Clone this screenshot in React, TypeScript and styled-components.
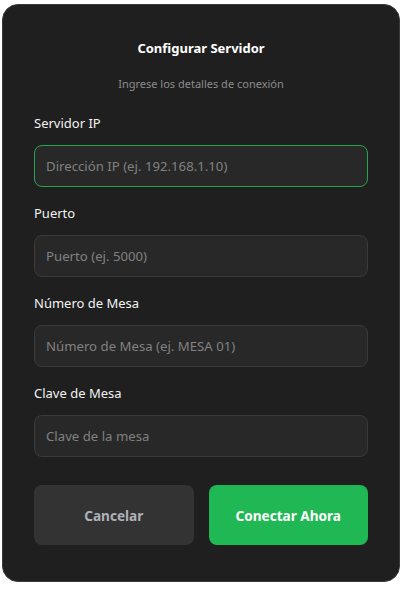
import styled, { createGlobalStyle } from "styled-components";

const GlobalStyle = createGlobalStyle`
  html, body {
    margin: 0;
    padding: 0;
    background: #fff;
  }
  body {
    font-family: "Noto Sans", "Open Sans", sans-serif;
  }
`;

const Card = styled.div`
  box-sizing: border-box;
  width: 398px;
  height: 578px;
  margin: 4px 0 0 2px;
  background: #1f1f1f;
  border: 1px solid #3a3a3a;
  border-radius: 16px;
  padding: 34px 31px 0 31px;
  display: flex;
  flex-direction: column;
`;

const Title = styled.h2`
  margin: 0;
  font-size: 13px;
  line-height: 18px;
  font-weight: 700;
  color: #fff;
  text-align: center;
`;

const Subtitle = styled.p`
  margin: 20px 0 0;
  font-size: 11px;
  line-height: 14px;
  color: #8c8c8c;
  text-align: center;
`;

const Form = styled.div`
  display: flex;
  flex-direction: column;
  gap: 17px;
  margin-top: 23px;
`;

const Field = styled.label`
  display: flex;
  flex-direction: column;
  gap: 13px;
`;

const Label = styled.span`
  font-size: 13px;
  line-height: 18px;
  color: #f2f2f2;
`;

const Input = styled.input<{ $active?: boolean }>`
  box-sizing: border-box;
  height: 42px;
  width: 100%;
  padding: 0 11px;
  border-radius: 8px;
  background: #282828;
  border: 1px solid ${(p) => (p.$active ? "#27a54d" : "#3a3a3a")};
  color: #eee;
  font-family: inherit;
  font-size: 13.2px;
  outline: none;
  &::placeholder {
    color: #818181;
  }
`;

const Actions = styled.div`
  display: grid;
  grid-template-columns: 1fr 1fr;
  gap: 15px;
  margin-top: 28px;
`;

const Button = styled.button<{ $primary?: boolean }>`
  height: 60px;
  border: none;
  border-radius: 8px;
  font-family: inherit;
  font-size: 13.6px;
  font-weight: 700;
  cursor: pointer;
  background: ${(p) => (p.$primary ? "#1fb855" : "#333333")};
  color: ${(p) => (p.$primary ? "#fff" : "#aeb2b9")};
`;

const fields = [
  { label: "Servidor IP", placeholder: "Dirección IP (ej. 192.168.1.10)" },
  { label: "Puerto", placeholder: "Puerto (ej. 5000)" },
  { label: "Número de Mesa", placeholder: "Número de Mesa (ej. MESA 01)" },
  { label: "Clave de Mesa", placeholder: "Clave de la mesa" },
];

export default function App() {
  return (
    <>
      <GlobalStyle />
      <Card>
        <Title>Configurar Servidor</Title>
        <Subtitle>Ingrese los detalles de conexión</Subtitle>
        <Form>
          {fields.map((f, i) => (
            <Field key={f.label}>
              <Label>{f.label}</Label>
              <Input
                $active={i === 0}
                autoFocus={i === 0}
                placeholder={f.placeholder}
                type={f.label === "Clave de Mesa" ? "password" : "text"}
              />
            </Field>
          ))}
        </Form>
        <Actions>
          <Button>Cancelar</Button>
          <Button $primary>Conectar Ahora</Button>
        </Actions>
      </Card>
    </>
  );
}
